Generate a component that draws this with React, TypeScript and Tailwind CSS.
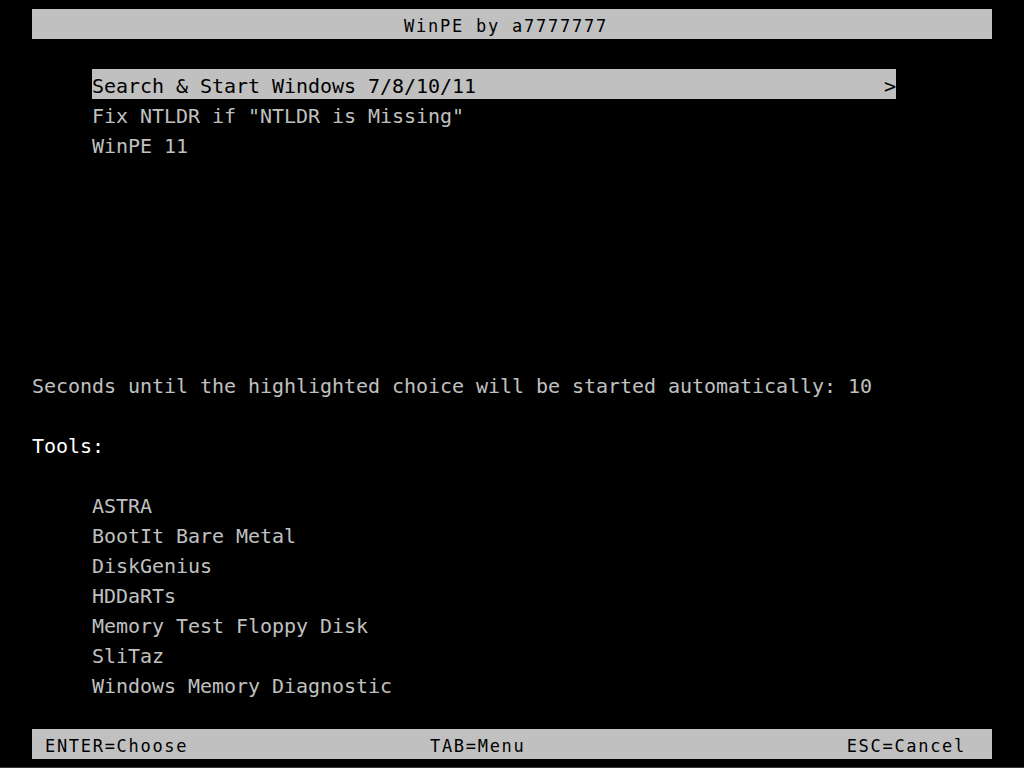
import React from 'react';

const bootEntries = ['Fix NTLDR if "NTLDR is Missing"', 'WinPE 11'];

const tools = [
  'ASTRA',
  'BootIt Bare Metal',
  'DiskGenius',
  'HDDaRTs',
  'Memory Test Floppy Disk',
  'SliTaz',
  'Windows Memory Diagnostic',
];

const mono = "font-['DejaVu_Sans_Mono','Liberation_Mono',monospace]";

function Line({ children, className = '' }: { children?: React.ReactNode; className?: string }) {
  return (
    <div className={`h-[30px] text-[20px] leading-[35px] tracking-[-0.04px] whitespace-pre ${className}`}>
      {children}
    </div>
  );
}

export default function App() {
  return (
    <div className={`w-full h-[768px] bg-black ${mono} flex flex-col pt-[9px] px-[32px] border-b border-[#3a3a3a] overflow-hidden`}>
      {/* title bar */}
      <div className="h-[30px] w-[960px] bg-[#c0c0c0] text-black text-[17px] leading-[34px] tracking-[1.77px] whitespace-pre pl-[372px]">
        WinPE by a7777777
      </div>

      <div className="h-[30px]" />

      {/* boot entries */}
      <div className="ml-[60px] w-[804px] h-[30px] bg-[#c0c0c0] text-black flex justify-between text-[20px] leading-[35px] tracking-[-0.04px] whitespace-pre">
        <span>Search &amp; Start Windows 7/8/10/11</span>
        <span>&gt;</span>
      </div>
      {bootEntries.map(e => (
        <Line key={e} className="pl-[60px] text-[#c0c0c0]">
          {e}
        </Line>
      ))}

      <div className="h-[210px]" />

      <Line className="text-[#c0c0c0]">
        Seconds until the highlighted choice will be started automatically: 10
      </Line>
      <div className="h-[30px]" />
      <Line className="text-white">Tools:</Line>
      <div className="h-[30px]" />

      {tools.map(t => (
        <Line key={t} className="pl-[60px] text-[#c0c0c0]">
          {t}
        </Line>
      ))}

      <div className="h-[30px]" />

      {/* status bar */}
      <div className="h-[30px] w-[960px] bg-[#c0c0c0] text-black text-[17px] leading-[35px] tracking-[1.7px] whitespace-pre flex pl-[13px] pr-[26px]">
        <span className="w-[385px]">ENTER=Choose</span>
        <span>TAB=Menu</span>
        <span className="ml-auto">ESC=Cancel</span>
      </div>
    </div>
  );
}
